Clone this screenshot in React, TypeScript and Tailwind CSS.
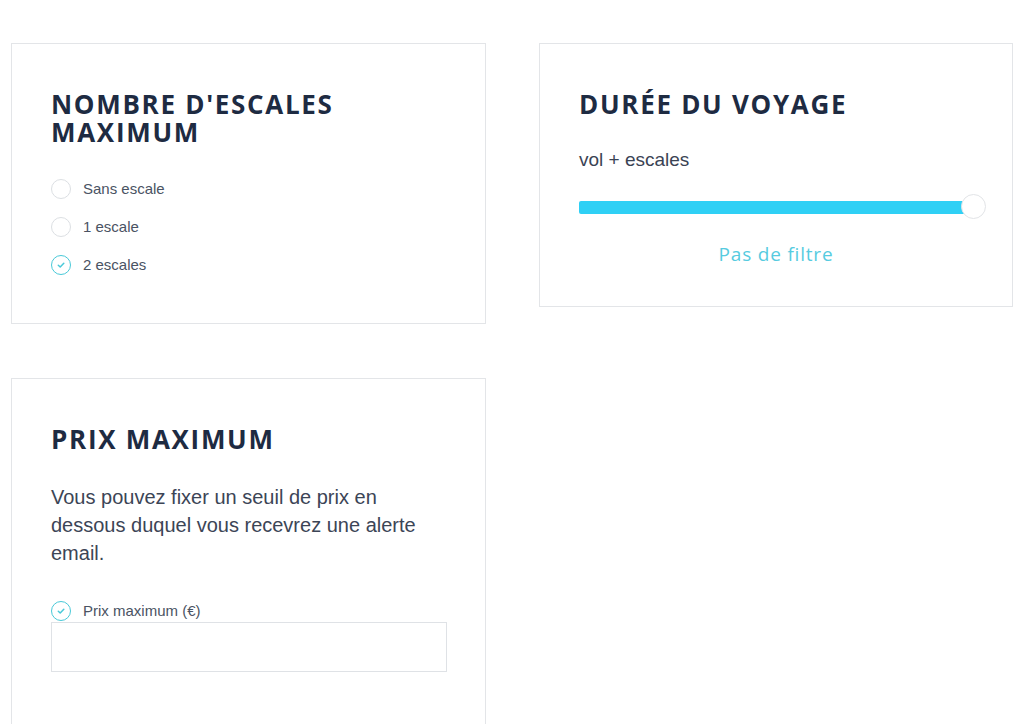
import React from 'react'

const titleFont = { fontFamily: '"Open Sans", "Liberation Sans", sans-serif' }

function Radio({ checked }: { checked?: boolean }) {
  if (checked) {
    return (
      <span className="flex h-[20px] w-[20px] shrink-0 items-center justify-center rounded-full border-[1.5px] border-[#49c9d8]">
        <svg width="10" height="10" viewBox="0 0 10 10" fill="none">
          <path d="M2.3 5.2 L4.2 7 L7.8 3.2" stroke="#49c9d8" strokeWidth="1.5" strokeLinecap="round" strokeLinejoin="round" />
        </svg>
      </span>
    )
  }
  return <span className="h-[20px] w-[20px] shrink-0 rounded-full border border-[#dcdfe3]" />
}

function Card({ title, children }: { title: React.ReactNode; children: React.ReactNode }) {
  return (
    <section className="border border-[#e3e5e8] bg-white px-[39px] pt-[46px]">
      <h2
        className="text-[26px] font-bold uppercase leading-[28px] tracking-[1.7px] text-[#1e2b42]"
        style={titleFont}
      >
        {title}
      </h2>
      {children}
    </section>
  )
}

export default function App() {
  const escales = ['Sans escale', '1 escale', '2 escales']

  return (
    <div
      className="min-h-[724px] bg-white px-[11px] pt-[43px] text-[#4a5363]"
      style={{ fontFamily: '"Liberation Sans", Arial, sans-serif' }}
    >
      <div className="grid grid-cols-[475px_474px] items-start gap-x-[53px] gap-y-[54px]">
        <Card title={<>Nombre d'escales<br />maximum</>}>
          <ul className="mt-[33px] space-y-[18px] pb-[48px]">
            {escales.map((label, i) => (
              <li key={label} className="flex items-center gap-[12px] text-[15px] leading-[20px]">
                <Radio checked={i === 2} />
                <span>{label}</span>
              </li>
            ))}
          </ul>
        </Card>

        <Card title="Durée du voyage">
          <p className="mt-[30px] text-[19px] leading-[24px] text-[#3a4354]">vol + escales</p>
          <div className="relative mt-[22px] h-[26px] w-[407px]">
            <div className="absolute left-0 top-[7px] h-[13px] w-[395px] rounded-[2px] bg-[#2fd0f5]" />
            <div className="absolute right-0 top-0 h-[25px] w-[25px] rounded-full border border-[#e2e4e7] bg-white" />
          </div>
          <p
            className="mt-[22px] pb-[40px] text-center text-[19px] leading-[24px] tracking-[0.8px] text-[#56cbe0]"
            style={{ fontFamily: '"Open Sans", sans-serif' }}
          >
            Pas de filtre
          </p>
        </Card>

        <Card title="Prix maximum">
          <p className="mt-[30px] text-[20px] leading-[28px] text-[#3c4556]">
            Vous pouvez fixer un seuil de prix en dessous duquel vous recevrez une alerte email.
          </p>
          <label className="mt-[34px] flex items-center gap-[12px] text-[15px] leading-[20px]">
            <Radio checked />
            <span>Prix maximum (€)</span>
          </label>
          <input type="text" className="mt-[1px] h-[50px] w-[396px] border border-[#dfe2e6] outline-none" />
          <div className="h-[80px]" />
        </Card>
      </div>
    </div>
  )
}
